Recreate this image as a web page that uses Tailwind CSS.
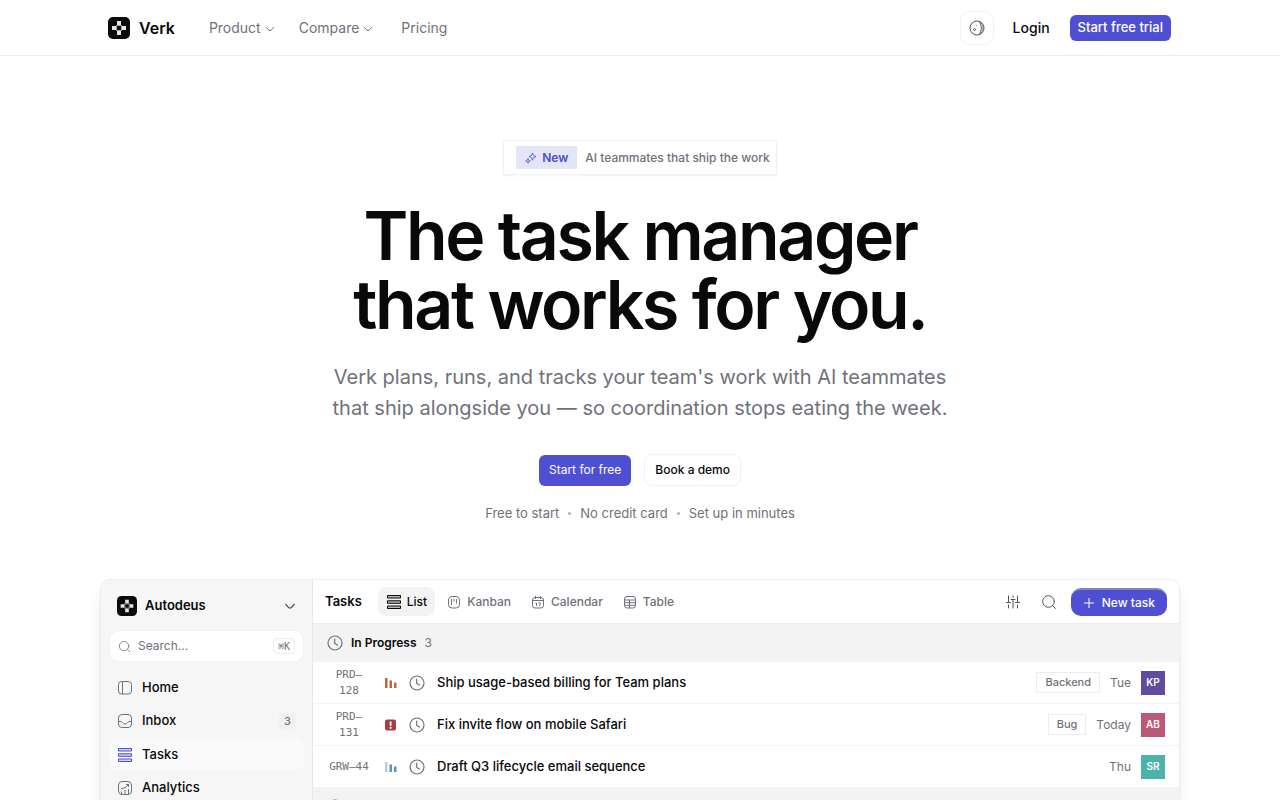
<!DOCTYPE html>
<html lang="en">
<head>
    <meta charset="UTF-8">
    <meta name="viewport" content="width=device-width, initial-scale=1.0">
    <title>Verk - The task manager that works for you</title>
    <script src="https://cdn.jsdelivr.net/npm/@tailwindcss/browser@4"></script>
</head>
<body class="bg-white font-['Inter',sans-serif] text-[#09090b]">

    <!-- Shared icons -->
    <svg class="hidden">
        <symbol id="logo" viewBox="0 0 22 22">
            <rect width="22" height="22" rx="5" fill="#0b0b0c"/>
            <path d="M9 4h4v4H9zM9 14h4v4H9zM4 9h4v4H4zM14 9h4v4h-4z" fill="#e4e4e7"/>
            <path d="M8 8h1.500v1.500H8zM12.500 8H14v1.500h-1.500zM8 12.500h1.500V14H8zM12.500 12.500H14V14h-1.500z" fill="#a1a1aa"/>
            <path d="M9.500 8h3v1h-3zM9.500 13h3v1h-3zM8 9.500h1v3H8zM13 9.500h1v3h-1z" fill="#b4b4b9"/>
        </symbol>
        <symbol id="chevron" viewBox="0 0 10 10">
            <path d="M1.500 3.500c.8 1 2.300 3.200 3.500 3.200s2.700-2.200 3.500-3.200" fill="none" stroke="currentColor" stroke-linecap="round"/>
        </symbol>
        <symbol id="search" viewBox="0 0 16 16">
            <g fill="none" stroke="currentColor" stroke-linecap="round"><circle cx="7.500" cy="7.500" r="5.800"/><path d="M11.700 11.700l2.800 2.800"/></g>
        </symbol>
        <symbol id="clock" viewBox="0 0 16 16">
            <g fill="none" stroke="currentColor" stroke-width="1.200" stroke-linecap="round" stroke-linejoin="round"><circle cx="8" cy="8" r="7"/><path d="M7.700 4v4.500l2.800 1.500"/></g>
        </symbol>
        <symbol id="list" viewBox="0 0 16 16">
            <path d="M1.500 1.500h13v2.500h-13zM1.500 6.800h13v2.500h-13zM1.500 12h13v2.500h-13z" fill="currentColor" fill-opacity=".25" stroke="currentColor" stroke-linejoin="round"/>
        </symbol>
    </svg>

    <!-- Top bar -->
    <header class="border-b border-[#ececee]">
        <div class="max-w-[1064px] h-[55px] pr-px mx-auto flex items-center">
            <a href="#" class="flex items-center gap-[9px] text-base font-semibold">
                <svg class="size-[22px]"><use href="#logo"/></svg>
                Verk
            </a>
            <nav class="ml-[34px] flex items-center text-sm text-[#71717a]">
                <button class="flex items-center gap-1">Product <svg class="size-[10px] mt-[2px]"><use href="#chevron"/></svg></button>
                <button class="ml-6 flex items-center gap-1">Compare <svg class="size-[10px] mt-[2px]"><use href="#chevron"/></svg></button>
                <a href="#" class="ml-7">Pricing</a>
            </nav>
            <div class="ml-auto flex items-center">
                <button aria-label="Toggle theme" class="size-[34px] border border-[#f1f1f3] rounded-[10px] flex items-center justify-center text-[#52525b]">
                    <svg class="size-4" viewBox="0 0 16 16" fill="none" stroke="currentColor">
                        <circle cx="8" cy="8" r="7"/>
                        <path d="M10 1.500c3 3.500 3 9.500 0 13"/>
                        <path d="M12 2.500c2.400 3 2.400 8 0 11" stroke-opacity=".6"/>
                        <circle cx="5.500" cy="9.500" r="1"/><path d="M7 5.500h.6"/>
                    </svg>
                </button>
                <a href="#" class="ml-[19px] text-sm font-medium">Login</a>
                <a href="#" class="ml-5 h-[26px] px-2 rounded-md bg-[#4f4fd3] text-white text-[13px] font-medium flex items-center">Start free trial</a>
            </div>
        </div>
    </header>

    <!-- Hero -->
    <section class="pt-[84px] flex flex-col items-center text-center">
        <a href="#" class="h-[35px] pl-3 pr-[6px] border border-[#f1f1f3] shadow-xs flex items-center gap-2 text-[12px] font-medium text-[#71717a]">
            <span class="h-[23px] px-[9px] bg-[#e5e5f8] text-[#4f4fc8] font-semibold flex items-center gap-[5px]">
                <svg class="size-3" viewBox="0 0 12 12" fill="none" stroke="currentColor" stroke-width=".8" stroke-linejoin="round">
                    <path d="M7.500 1l.9 2.400 2.600 1.100-2.500 1.100-1 2.600-1.100-2.600L4 4.500l2.500-1.100zM3 6.500l.6 1.700 1.700.7-1.700.7L3 11.200l-.7-1.600-1.600-.7 1.600-.7z"/>
                </svg>
                New
            </span>
            AI teammates that ship the work
        </a>
        <h1 class="mt-[26px] text-[68px] leading-[69px] font-semibold tracking-[-0.035em]">The task manager<br>that works for you.</h1>
        <p class="mt-[23px] text-xl leading-[31px] text-[#71717a]">Verk plans, runs, and tracks your team's work with AI teammates<br>that ship alongside you — so coordination stops eating the week.</p>
        <div class="mt-[30px] flex items-center gap-[13px] text-[12px] font-medium">
            <a href="#" class="h-[31px] px-[10px] rounded-md bg-[#4f4fd3] text-white font-normal flex items-center">Start for free</a>
            <a href="#" class="h-8 px-[10px] rounded-lg border border-[#f1f1f3] flex items-center">Book a demo</a>
        </div>
        <div class="mt-[17px] flex items-center gap-[9px] text-[13px] leading-5 text-[#71717a]">
            <span>Free to start</span>
            <i class="size-[3px] rounded-full bg-[#b4b4b9]"></i>
            <span>No credit card</span>
            <i class="size-[3px] rounded-full bg-[#b4b4b9]"></i>
            <span>Set up in minutes</span>
        </div>
    </section>

    <!-- App preview -->
    <section class="mt-14 max-w-[1080px] mx-auto border border-[#ececee] rounded-[10px] overflow-hidden shadow-lg flex text-[13px]">
        <aside class="w-[212px] shrink-0 bg-[#f6f6f6] border-r border-[#e8e8ea] px-2 pt-4 pb-4">
            <button class="w-full px-2 h-5 flex items-center gap-2 font-semibold text-[13px]">
                <svg class="size-5"><use href="#logo"/></svg>
                Autodeus
                <svg class="size-3 ml-auto text-[#52525b]"><use href="#chevron"/></svg>
            </button>
            <label class="mt-[14px] h-8 px-2 bg-white border border-[#f0f0f1] rounded-[10px] flex items-center gap-[7px] text-[#71717a]">
                <svg class="size-[13px] shrink-0"><use href="#search"/></svg>
                <input type="text" aria-label="Search" placeholder="Search..." class="min-w-0 flex-1 text-[12px] outline-none placeholder:text-[#71717a]">
                <kbd class="h-4 px-1 border border-[#ececee] rounded-sm font-['DejaVu_Sans_Mono',monospace] text-[10px] flex items-center">⌘K</kbd>
            </label>
            <nav class="mt-[11px] flex flex-col gap-[3px] text-[13px] font-medium">
                <a href="#" class="h-[30px] px-2 rounded-lg flex items-center gap-[9px]">
                    <svg class="size-4 text-[#71717a]" viewBox="0 0 16 16" fill="none" stroke="currentColor"><rect x="1.500" y="1.500" width="13" height="12.500" rx="3"/><path d="M5.500 1.500v12.500"/></svg>
                    Home
                </a>
                <a href="#" class="h-[30px] px-2 rounded-lg flex items-center gap-[9px]">
                    <svg class="size-4 text-[#71717a]" viewBox="0 0 16 16" fill="none" stroke="currentColor"><rect x="1.500" y="1.500" width="13" height="13" rx="3.500"/><path d="M1.500 8.500h2.500c1.200 0 1.700 2.500 4 2.500s2.800-2.500 4-2.500h2.500"/></svg>
                    Inbox
                    <span class="ml-auto px-[5px] bg-[#f1f1f2] rounded-sm text-[11px] leading-4 text-[#71717a]">3</span>
                </a>
                <a href="#" class="h-[31px] px-2 rounded-lg bg-[#fafafa] flex items-center gap-[9px]">
                    <svg class="size-4 text-[#4f4fd3]"><use href="#list"/></svg>
                    Tasks
                </a>
                <a href="#" class="h-[30px] px-2 rounded-lg flex items-center gap-[9px]">
                    <svg class="size-4 text-[#71717a]" viewBox="0 0 16 16" fill="none" stroke="currentColor"><rect x="1.500" y="1.500" width="13" height="13" rx="3.500"/><path d="M4.500 14v-2.500M8 14v-4M11.500 14V9M4 8.500c3 0 5-1 7.500-4M9 4.500h2.500V7"/></svg>
                    Analytics
                </a>
            </nav>
        </aside>

        <div class="flex-1 min-w-0 bg-white">
            <!-- View switcher -->
            <div class="h-11 pl-3 pr-3 border-b border-[#ececee] flex items-center">
                <h2 class="text-[13px] font-semibold">Tasks</h2>
                <div class="ml-4 flex items-center gap-1 text-[12px] font-medium text-[#71717a]">
                    <button class="h-[29px] px-2 rounded-lg bg-[#f3f3f4] text-[#09090b] flex items-center gap-[5px]">
                        <svg class="size-4"><use href="#list"/></svg>
                        List
                    </button>
                    <button class="h-[29px] px-2 flex items-center gap-[6px]">
                        <svg class="size-[14px]" viewBox="0 0 14 14" fill="none" stroke="currentColor"><rect x="1.500" y="1.500" width="11" height="11.500" rx="3.500"/><path d="M4.500 4v6M7 4v2.500M9.500 4v4.500"/></svg>
                        Kanban
                    </button>
                    <button class="h-[29px] px-2 flex items-center gap-[6px]">
                        <svg class="size-[14px]" viewBox="0 0 14 14" fill="none" stroke="currentColor"><rect x="1.500" y="2.500" width="11" height="10.500" rx="2.500"/><path d="M1.500 5.500h11M4.500 1v3M9.500 1v3M4.500 8h1v3M7.500 8h2l-1 3"/></svg>
                        Calendar
                    </button>
                    <button class="h-[29px] px-2 flex items-center gap-[6px]">
                        <svg class="size-[14px]" viewBox="0 0 14 14" fill="none" stroke="currentColor"><rect x="1.500" y="1.500" width="11" height="11.500" rx="2.500"/><path d="M1.500 5h11M1.500 7.700h11M1.500 10.300h11M6.500 5v8"/></svg>
                        Table
                    </button>
                </div>
                <div class="ml-auto flex items-center text-[#52525b]">
                    <button aria-label="Filters">
                        <svg class="size-4 block" viewBox="0 0 16 16" fill="none" stroke="currentColor" stroke-linecap="round"><path d="M3.500 2v6.500M3.500 11v3M1.500 8.500h4M8 2v1.500M8 5.500V14M6 5.500h4M12.500 2v6.500M12.500 11v3M10.500 8.500h4"/></svg>
                    </button>
                    <button aria-label="Search tasks" class="ml-5"><svg class="size-4 block"><use href="#search"/></svg></button>
                    <button class="ml-[14px] h-7 px-3 rounded-[10px] bg-[#4f4fd3] border-t-2 border-[#8585b8] text-white text-[12px] font-medium flex items-center gap-[7px]">
                        <svg class="size-3" viewBox="0 0 12 12" stroke="currentColor"><path d="M6 1v10M1 6h10"/></svg>
                        New task
                    </button>
                </div>
            </div>

            <div class="h-[37px] px-[14px] bg-[#f3f3f4] flex items-center text-[12px] text-[#71717a]">
                <svg class="size-4"><use href="#clock"/></svg>
                <h3 class="ml-2 font-semibold text-[#09090b]">In Progress</h3>
                <span class="ml-2">3</span>
            </div>

            <table class="w-full text-[13px]">
                <tbody>
                    <tr class="h-[42px] border-y border-[#f3f3f4]">
                        <td class="w-[60px] pl-3 text-center font-['DejaVu_Sans_Mono',monospace] text-[11px] leading-4 text-[#71717a]">PRD–<br>128</td>
                        <td class="w-[36px] pl-3"><svg class="size-3" viewBox="0 0 12 12"><path d="M0 1h2.500v10H0zM4.500 3.500H7V11H4.500zM9 5.500h2.500V11H9z" fill="#b9683f"/></svg></td>
                        <td class="w-[28px]"><svg class="size-4 text-[#71717a]"><use href="#clock"/></svg></td>
                        <td class="font-medium">Ship usage-based billing for Team plans</td>
                        <td class="pr-[14px]">
                            <div class="flex items-center justify-end gap-[10px] text-[12px] text-[#71717a]">
                                <span class="h-[21px] px-2 border border-[#ececee] text-[11px] font-medium flex items-center">Backend</span>
                                <span>Tue</span>
                                <span class="size-6 bg-[#5f4b9f] text-white text-[10px] font-semibold flex items-center justify-center">KP</span>
                            </div>
                        </td>
                    </tr>
                    <tr class="h-[42px] border-y border-[#f3f3f4]">
                        <td class="pl-3 text-center font-['DejaVu_Sans_Mono',monospace] text-[11px] leading-4 text-[#71717a]">PRD–<br>131</td>
                        <td class="pl-3"><svg class="size-3" viewBox="0 0 12 12"><rect y=".5" width="11" height="11" rx="2" fill="#a53f44"/><path d="M4.700 2.500h1.800v4.500H4.700zM4.700 8h1.800v1.700H4.700z" fill="#fff"/></svg></td>
                        <td><svg class="size-4 text-[#71717a]"><use href="#clock"/></svg></td>
                        <td class="font-medium">Fix invite flow on mobile Safari</td>
                        <td class="pr-[14px]">
                            <div class="flex items-center justify-end gap-[10px] text-[12px] text-[#71717a]">
                                <span class="h-[21px] px-2 border border-[#ececee] text-[11px] font-medium flex items-center">Bug</span>
                                <span>Today</span>
                                <span class="size-6 bg-[#bb5a76] text-white text-[10px] font-semibold flex items-center justify-center">AB</span>
                            </div>
                        </td>
                    </tr>
                    <tr class="h-[42px] border-y border-[#f3f3f4]">
                        <td class="pl-3 text-center font-['DejaVu_Sans_Mono',monospace] text-[11px] leading-4 text-[#71717a] whitespace-nowrap">GRW–44</td>
                        <td class="pl-3"><svg class="size-3" viewBox="0 0 12 12"><path d="M0 1h2.500v10H0z" fill="#bccbd6"/><path d="M4.500 3.500H7V11H4.500zM9 5.500h2.500V11H9z" fill="#5f93b5"/></svg></td>
                        <td><svg class="size-4 text-[#71717a]"><use href="#clock"/></svg></td>
                        <td class="font-medium">Draft Q3 lifecycle email sequence</td>
                        <td class="pr-[14px]">
                            <div class="flex items-center justify-end gap-[10px] text-[12px] text-[#71717a]">
                                <span>Thu</span>
                                <span class="size-6 bg-[#4bb3a7] text-white text-[10px] font-semibold flex items-center justify-center">SR</span>
                            </div>
                        </td>
                    </tr>
                </tbody>
            </table>

            <div class="h-[37px] px-[14px] bg-[#f3f3f4] flex items-center text-[12px] text-[#71717a]">
                <svg class="size-4"><use href="#clock"/></svg>
            </div>
        </div>
    </section>

</body>
</html>
